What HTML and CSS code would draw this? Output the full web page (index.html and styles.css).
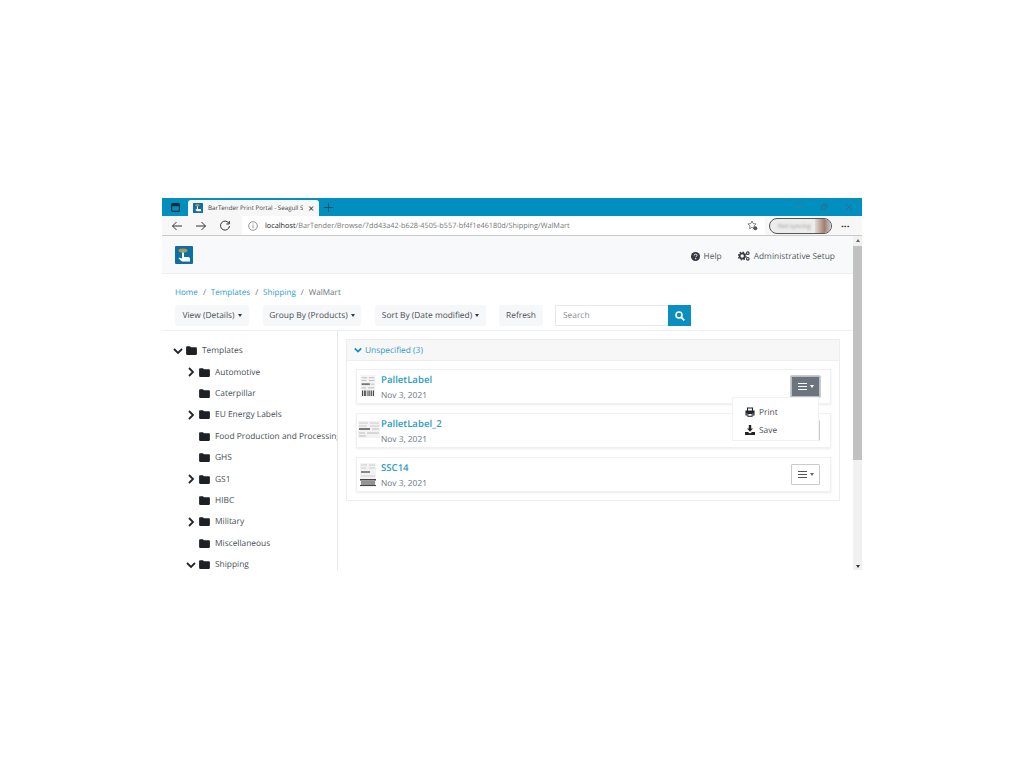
FILE: index.html
```html
<!DOCTYPE html>
<html lang="en">
<head>
    <meta charset="UTF-8">
    <meta name="viewport" content="width=device-width, initial-scale=1.0">
    <title>BarTender Print Portal</title>
    <link rel="stylesheet" href="styles.css">
</head>
<body>
    <div class="window">
        <!-- tab strip -->
        <div class="tabstrip">
            <div class="tab-menu">
                <svg width="9" height="9" viewBox="0 0 10 10"><rect x="0.7" y="0.7" width="8.6" height="8.6" rx="1.2" fill="none" stroke="#1d2b33" stroke-width="1.200"/><rect x="1" y="1" width="8" height="2.600" fill="#1d2b33"/></svg>
            </div>
            <div class="tab">
                <svg class="favicon" width="10" height="10" viewBox="0 0 18 18"><rect width="18" height="18" rx="1" fill="#0f6ea3"/><ellipse cx="8" cy="4" rx="4" ry="2" fill="#a89a55"/><path d="M7 6h2v5h5l1 4H7l-3-3 3-1z" fill="#fff"/></svg>
                <span class="tab-title">BarTender Print Portal - Seagull S</span>
                <span class="tab-close">×</span>
            </div>
            <svg class="tab-new" width="9" height="9" viewBox="0 0 10 10"><path d="M5 0v10M0 5h10" stroke="#1a4a5e" stroke-width="1"/></svg>
            <div class="win-controls">
                <svg width="8" height="8" viewBox="0 0 8 8"><path d="M0 4h8" stroke="#3f7f99" stroke-width="1"/></svg>
                <svg width="8" height="8" viewBox="0 0 8 8"><path d="M1.500 2.500h4v4h-4zM3 1h4v4" fill="none" stroke="#2f6f8a" stroke-width="1"/></svg>
                <svg width="8" height="8" viewBox="0 0 8 8"><path d="M1 1l6 6M7 1l-6 6" stroke="#2f6f8a" stroke-width="1"/></svg>
            </div>
        </div>

        <!-- address bar -->
        <div class="addressbar">
            <svg class="nav-icon" width="12" height="12" viewBox="0 0 12 12"><path d="M11 6H1.500M5.500 2L1.500 6l4 4" fill="none" stroke="#333" stroke-width="1"/></svg>
            <svg class="nav-icon" width="12" height="12" viewBox="0 0 12 12"><path d="M1 6h9.500M6.500 2l4 4-4 4" fill="none" stroke="#333" stroke-width="1"/></svg>
            <svg class="nav-icon" width="12" height="12" viewBox="0 0 12 12"><path d="M10 3.500A4.500 4.500 0 1 0 10.500 6M10.300 1v3h-3" fill="none" stroke="#333" stroke-width="1"/></svg>
            <div class="url-box">
                <svg width="10" height="10" viewBox="0 0 10 10"><circle cx="5" cy="5" r="4.300" fill="none" stroke="#777" stroke-width="0.800"/><path d="M5 4.300v3M5 2.500v1" stroke="#777" stroke-width="0.800"/></svg>
                <span class="url"><b>localhost</b>/BarTender/Browse/7dd43a42-b628-4505-b557-bf4f1e46180d/Shipping/WalMart</span>
                <svg class="fav-icon" width="11" height="11" viewBox="0 0 11 11"><path d="M5 1l1.200 2.600 2.800.3-2 2 .5 2.800L5 7.400 2.500 8.700 3 5.900l-2-2 2.800-.3z" fill="none" stroke="#555" stroke-width="0.700"/><circle cx="8.300" cy="8.300" r="2" fill="#555"/></svg>
            </div>
            <div class="profile"><span class="profile-name">Not syncing</span><span class="profile-pic"></span></div>
            <span class="more">···</span>
        </div>

        <!-- page -->
        <div class="viewport">
            <div class="page">
                <nav class="navbar">
                    <svg class="logo" width="18" height="18" viewBox="0 0 18 18"><rect width="18" height="18" rx="1" fill="#0f6ea3"/><ellipse cx="8" cy="4.500" rx="4.500" ry="2" fill="#a89a55"/><path d="M7 6.500h2v4.500h4.500l1.500 1v3.500H7l-3.500-3 1-1 2.500 1z" fill="#fff"/></svg>
                    <div class="navbar-links">
                        <a class="nav-link">
                            <svg width="9" height="9" viewBox="0 0 10 10"><circle cx="5" cy="5" r="5" fill="#343a40"/><path d="M3.400 3.900C3.500 2.900 4.200 2.400 5.100 2.400c1 0 1.600.6 1.600 1.300 0 1.200-1.400 1.100-1.400 2.200" fill="none" stroke="#fff" stroke-width="1"/><circle cx="5.200" cy="7.400" r=".7" fill="#fff"/></svg>
                            Help
                        </a>
                        <a class="nav-link">
                            <svg width="12" height="10" viewBox="0 0 12 10"><circle cx="4.200" cy="5" r="2.600" fill="none" stroke="#343a40" stroke-width="1.800"/><circle cx="4.200" cy="5" r="3.900" fill="none" stroke="#343a40" stroke-width="1.100" stroke-dasharray="1.500 1.560"/><circle cx="9.800" cy="2.200" r="1.300" fill="none" stroke="#343a40" stroke-width="1.100"/><circle cx="9.800" cy="7.800" r="1.300" fill="none" stroke="#343a40" stroke-width="1.100"/></svg>
                            Administrative Setup
                        </a>
                    </div>
                </nav>

                <ol class="breadcrumb">
                    <li><a>Home</a></li>
                    <li class="sep">/</li>
                    <li><a>Templates</a></li>
                    <li class="sep">/</li>
                    <li><a>Shipping</a></li>
                    <li class="sep">/</li>
                    <li class="current">WalMart</li>
                </ol>

                <div class="toolbar">
                    <button class="btn btn-view">View (Details)<span class="caret"></span></button>
                    <button class="btn btn-group">Group By (Products)<span class="caret"></span></button>
                    <button class="btn btn-sort">Sort By (Date modified)<span class="caret"></span></button>
                    <button class="btn btn-refresh">Refresh</button>
                    <div class="search">
                        <input type="text" placeholder="Search">
                        <button class="search-btn">
                            <svg width="10" height="10" viewBox="0 0 10 10"><circle cx="4" cy="4" r="3" fill="none" stroke="#fff" stroke-width="1.600"/><path d="M6.300 6.300L9.300 9.300" stroke="#fff" stroke-width="1.800"/></svg>
                        </button>
                    </div>
                </div>

                <div class="content">
                    <aside class="tree">
                        <div class="tree-row level-0"><svg class="chev" viewBox="0 0 10 10"><use href="#chev-down"/></svg><svg class="folder" viewBox="0 0 12 10"><use href="#folder"/></svg>Templates</div>
                        <div class="tree-row"><svg class="chev" viewBox="0 0 10 10"><use href="#chev-right"/></svg><svg class="folder" viewBox="0 0 12 10"><use href="#folder"/></svg>Automotive</div>
                        <div class="tree-row"><span class="chev"></span><svg class="folder" viewBox="0 0 12 10"><use href="#folder"/></svg>Caterpillar</div>
                        <div class="tree-row"><svg class="chev" viewBox="0 0 10 10"><use href="#chev-right"/></svg><svg class="folder" viewBox="0 0 12 10"><use href="#folder"/></svg>EU Energy Labels</div>
                        <div class="tree-row"><span class="chev"></span><svg class="folder" viewBox="0 0 12 10"><use href="#folder"/></svg>Food Production and Processing</div>
                        <div class="tree-row"><span class="chev"></span><svg class="folder" viewBox="0 0 12 10"><use href="#folder"/></svg>GHS</div>
                        <div class="tree-row"><svg class="chev" viewBox="0 0 10 10"><use href="#chev-right"/></svg><svg class="folder" viewBox="0 0 12 10"><use href="#folder"/></svg>GS1</div>
                        <div class="tree-row"><span class="chev"></span><svg class="folder" viewBox="0 0 12 10"><use href="#folder"/></svg>HIBC</div>
                        <div class="tree-row"><svg class="chev" viewBox="0 0 10 10"><use href="#chev-right"/></svg><svg class="folder" viewBox="0 0 12 10"><use href="#folder"/></svg>Military</div>
                        <div class="tree-row"><span class="chev"></span><svg class="folder" viewBox="0 0 12 10"><use href="#folder"/></svg>Miscellaneous</div>
                        <div class="tree-row"><svg class="chev" viewBox="0 0 10 10"><use href="#chev-down"/></svg><svg class="folder" viewBox="0 0 12 10"><use href="#folder"/></svg>Shipping</div>
                    </aside>

                    <main class="results">
                        <div class="group-card">
                            <div class="group-header">
                                <svg width="8" height="8" viewBox="0 0 10 10"><path d="M1 3l4 4 4-4" fill="none" stroke="#0a8fc0" stroke-width="2"/></svg>
                                Unspecified (3)
                            </div>
                            <div class="group-body">
                                <div class="item">
                                    <svg class="thumb" width="16" height="22" viewBox="0 0 16 24"><rect width="16" height="24" fill="#f3f3f3"/><path d="M1 3h6M9 3h6M1 6h5M9 6h6" stroke="#bbb"/><rect x="1" y="9" width="9" height="2" fill="#777"/><path d="M11 10h4M1 14h5M8 14h7" stroke="#bbb"/><path d="M2 17v6M4 17v6M5.500 17v6M8 17v6M10 17v6M12 17v6M14 17v6" stroke="#444" stroke-width="1.100"/></svg>
                                    <div class="item-text">
                                        <a class="item-name">PalletLabel</a>
                                        <span class="item-date">Nov 3, 2021</span>
                                    </div>
                                    <button class="menu-btn active"><span class="bars"></span><span class="caret"></span></button>
                                </div>
                                <div class="item">
                                    <svg class="thumb" width="22" height="17" viewBox="0 0 22 17"><rect width="22" height="17" fill="#f3f3f3"/><path d="M1 2h9M12 2h9M1 5h8M12 5h9" stroke="#ccc"/><rect x="1" y="7" width="11" height="2" fill="#777"/><path d="M14 8h7M1 12h6M9 12h12M1 15h7" stroke="#bbb"/></svg>
                                    <div class="item-text">
                                        <a class="item-name">PalletLabel_2</a>
                                        <span class="item-date">Nov 3, 2021</span>
                                    </div>
                                    <button class="menu-btn"><span class="bars"></span><span class="caret"></span></button>
                                </div>
                                <div class="item">
                                    <svg class="thumb" width="16" height="24" viewBox="0 0 16 24"><rect width="16" height="24" fill="#f3f3f3"/><path d="M1 2h6M9 2h6M1 5h5M9 5h6" stroke="#ccc"/><rect x="1" y="8" width="9" height="2" fill="#888"/><path d="M1 13h14" stroke="#ccc"/><rect x="0" y="16" width="16" height="1.500" fill="#444"/><path d="M2 18v4M4 18v4M6 18v4M8 18v4M10 18v4M12 18v4M14 18v4" stroke="#444" stroke-width="1.100"/><rect x="0" y="22" width="16" height="1" fill="#444"/></svg>
                                    <div class="item-text">
                                        <a class="item-name">SSC14</a>
                                        <span class="item-date">Nov 3, 2021</span>
                                    </div>
                                    <button class="menu-btn"><span class="bars"></span><span class="caret"></span></button>
                                </div>
                            </div>
                        </div>

                        <div class="dropdown">
                            <div class="dropdown-item">
                                <svg width="10" height="10" viewBox="0 0 10 10"><path d="M2.500 3.500V1h5v2.500M2.500 8H1V4h8v4H7.500" fill="none" stroke="#212529" stroke-width="1.100"/><rect x="1" y="4" width="8" height="2.500" fill="#212529"/><rect x="2.900" y="6.500" width="4.200" height="2.800" fill="none" stroke="#212529" stroke-width="1"/></svg>
                                Print
                            </div>
                            <div class="dropdown-item">
                                <svg width="10" height="10" viewBox="0 0 10 10"><path d="M3.800 0h2.400v3.500H8L5 6.800 2 3.500h1.800z" fill="#212529"/><path d="M0 7h3l2 1.500L7 7h3v3H0z" fill="#212529"/></svg>
                                Save
                            </div>
                        </div>
                    </main>
                </div>
            </div>

            <div class="scrollbar">
                <span class="arrow-up"></span>
                <div class="scroll-thumb"></div>
                <span class="arrow-down"></span>
            </div>
        </div>
    </div>

    <svg class="defs" width="0" height="0">
        <symbol id="chev-down" viewBox="0 0 10 10"><path d="M1 3l4 4 4-4" fill="none" stroke="#212529" stroke-width="1.800"/></symbol>
        <symbol id="chev-right" viewBox="0 0 10 10"><path d="M3 1l4 4-4 4" fill="none" stroke="#212529" stroke-width="1.800"/></symbol>
        <symbol id="folder" viewBox="0 0 12 10"><path d="M0 1.200C0 .6.400.2 1 .2h3.200l1.200 1.300H11c.6 0 1 .4 1 1V9c0 .5-.4.900-1 .9H1c-.6 0-1-.4-1-.9z" fill="#1d2126"/></symbol>
    </svg>
</body>
</html>
```

FILE: styles.css
```css
* {
    box-sizing: border-box;
}
body {
    margin: 0;
    background: #fff;
    font-family: "Open Sans", "Noto Sans", sans-serif;
    font-size: 8.400px;
    text-rendering: geometricPrecision;
    color: #495057;
}
.window {
    width: 700px;
    height: 372px;
    margin: 198px 0 0 162px;
    overflow: hidden;
    display: flex;
    flex-direction: column;
}
.defs {
    display: block;
}

/* browser chrome */
.tabstrip {
    height: 18px;
    background: #008fbe;
    display: flex;
    align-items: center;
    flex-shrink: 0;
}
.tab-menu {
    width: 26px;
    display: flex;
    justify-content: center;
}
.tab {
    width: 131px;
    height: 16px;
    margin-top: 2px;
    border-radius: 3px 3px 0 0;
    background: #f7f7f7;
    display: flex;
    align-items: center;
    padding: 0 0 1px 5px;
    font-size: 6.200px;
    color: #444;
}
.favicon {
    margin-right: 5px;
    flex-shrink: 0;
}
.tab-title {
    flex: 1;
    min-width: 0;
    white-space: nowrap;
    overflow: hidden;
}
.tab-close {
    width: 16px;
    font-size: 10px;
    color: #222;
    text-align: center;
}
.tab-new {
    margin-left: 5px;
}
.win-controls {
    margin-left: auto;
    display: flex;
    gap: 17px;
    padding-right: 9px;
}
.addressbar {
    height: 20px;
    background: #f7f7f7;
    display: flex;
    align-items: center;
    padding-left: 9px;
    flex-shrink: 0;
    border-bottom: 1px solid #c9c9c9;
}
.nav-icon {
    margin-right: 12px;
}
.url-box {
    width: 523px;
    height: 19px;
    margin-left: -1px;
    background: #fff;
    display: flex;
    align-items: center;
    padding: 0 7px 0 6px;
    font-size: 7.300px;
    color: #777;
}
.url {
    margin-left: 7px;
    flex: 1;
    white-space: nowrap;
    overflow: hidden;
}
.url b {
    font-weight: 400;
    color: #222;
}
.profile {
    width: 63px;
    height: 16px;
    margin-left: 4px;
    border: 1.500px solid #555;
    border-radius: 8px;
    display: flex;
    align-items: center;
    justify-content: space-between;
    overflow: hidden;
    background: #ececec;
    font-size: 6px;
    color: #999;
    padding-left: 8px;
}
.profile-name {
    filter: blur(1px);
}
.profile-pic {
    width: 16px;
    height: 100%;
    background: linear-gradient(90deg, #e2d8d2, #a07f70 60%, #ccc);
}
.more {
    margin-left: 9px;
    font-size: 10px;
    color: #333;
    font-weight: 700;
}

/* page */
.viewport {
    flex: 1;
    display: flex;
    min-height: 0;
}
.page {
    width: 691px;
    display: flex;
    flex-direction: column;
    overflow: hidden;
}
.navbar {
    height: 38px;
    background: #f8f9fa;
    border-bottom: 1px solid #eceeef;
    display: flex;
    align-items: center;
    justify-content: space-between;
    padding: 0 18px 0 13px;
    flex-shrink: 0;
}
.navbar-links {
    display: flex;
    gap: 16px;
    padding-top: 3px;
}
.nav-link {
    display: flex;
    align-items: center;
    gap: 4px;
    color: #555b61;
}
.breadcrumb {
    list-style: none;
    margin: 13px 0 0;
    padding: 0 0 0 13px;
    display: flex;
    gap: 5px;
    line-height: 12px;
    font-size: 8.100px;
    flex-shrink: 0;
}
.breadcrumb a {
    color: #2f9cc4;
}
.breadcrumb .current, .breadcrumb .sep {
    color: #6c757d;
}
.toolbar {
    display: flex;
    align-items: center;
    height: 21px;
    margin-top: 6px;
    padding-left: 13px;
    flex-shrink: 0;
}
.btn {
    height: 21px;
    border: none;
    border-radius: 2px;
    background: #f6f7f8;
    font: inherit;
    text-rendering: inherit;
    color: #495057;
    padding: 0;
}
.btn-view { width: 74px; }
.btn-group { width: 98px; margin-left: 14px; }
.btn-sort { width: 111px; margin-left: 14px; }
.btn-refresh { width: 44px; margin-left: 13px; }
.caret {
    display: inline-block;
    margin-left: 3px;
    vertical-align: 1px;
    border-top: 3px solid #343a40;
    border-left: 2.500px solid transparent;
    border-right: 2.500px solid transparent;
}
.search {
    display: flex;
    margin-left: 12px;
}
.search input {
    width: 113px;
    height: 21px;
    border: 1px solid #e6e8ea;
    border-right: none;
    padding: 0 7px;
    font: inherit;
    text-rendering: inherit;
    color: #495057;
}
.search input::placeholder {
    color: #8a9097;
}
.search-btn {
    width: 23px;
    height: 21px;
    border: none;
    padding: 0;
    background: #0a8fc0;
    display: flex;
    align-items: center;
    justify-content: center;
}
.content {
    flex: 1;
    display: flex;
    min-height: 0;
    margin-top: 4px;
    border-top: 1px solid #eef0f1;
}
.tree {
    width: 176px;
    flex-shrink: 0;
    border-right: 1px solid #e6e8ea;
    padding: 9px 0 0 11px;
    overflow: hidden;
}
.tree-row {
    height: 21.400px;
    display: flex;
    align-items: center;
    padding-left: 13px;
    white-space: nowrap;
    color: #495057;
}
.tree-row.level-0 {
    padding-left: 0;
}
.chev {
    width: 10px;
    height: 10px;
    margin-right: 3px;
    flex-shrink: 0;
}
.folder {
    width: 11px;
    height: 9px;
    margin-right: 5px;
    flex-shrink: 0;
}
.results {
    flex: 1;
    position: relative;
    padding: 8px 13px 0 8px;
}
.group-card {
    border: 1px solid #eceeef;
}
.group-header {
    height: 21px;
    background: #f7f7f7;
    border-bottom: 1px solid #eceeef;
    display: flex;
    align-items: center;
    gap: 3px;
    padding-left: 7px;
    color: #2f9cc4;
}
.group-body {
    padding: 8px 8px 8px 9px;
    display: flex;
    flex-direction: column;
    gap: 9px;
}
.item {
    height: 35px;
    border: 1px solid #eef0f1;
    box-shadow: 0 1px 2px rgba(0, 0, 0, 0.08);
    display: flex;
    align-items: center;
    position: relative;
    padding-left: 24px;
    padding-right: 10px;
}
.thumb {
    position: absolute;
    left: 3px;
    top: 5px;
}
.item:nth-child(2) .thumb {
    left: 1px;
    top: 7px;
}
.item-text {
    flex: 1;
    display: flex;
    flex-direction: column;
    gap: 3px;
    padding-top: 1px;
}
.item-name {
    font-size: 9.600px;
    font-weight: 600;
    line-height: 14px;
    color: #2f9cc4;
}
.item-date {
    color: #6c757d;
    line-height: 12px;
}
.menu-btn {
    width: 29px;
    height: 21px;
    border: 1px solid #c8ccd0;
    border-radius: 1px;
    background: #fff;
    padding: 0;
    display: flex;
    align-items: center;
    justify-content: center;
}
.menu-btn.active {
    background: #6c757d;
    border-color: #b8bfc4;
    box-shadow: 0 0 0 1px #c8cdd1;
}
.bars {
    width: 9px;
    height: 7px;
    border-top: 1px solid #555;
    border-bottom: 1px solid #555;
    position: relative;
}
.bars::after {
    content: "";
    position: absolute;
    left: 0;
    right: 0;
    top: 2px;
    height: 1px;
    background: #555;
}
.menu-btn .caret {
    border-top-color: #666;
}
.active .bars, .active .bars::after {
    border-color: #fff;
}
.active .bars::after {
    background: #fff;
}
.active .caret {
    border-top-color: #fff;
}
.dropdown {
    position: absolute;
    left: 394px;
    top: 66px;
    width: 87px;
    height: 44px;
    background: #fff;
    border: 1px solid #f0f1f2;
    padding-top: 5px;
}
.dropdown-item {
    height: 18px;
    display: flex;
    align-items: center;
    gap: 4px;
    padding-left: 12px;
    color: #495057;
}

/* scrollbar */
.scrollbar {
    width: 9px;
    background: #f1f1f1;
    display: flex;
    flex-direction: column;
    align-items: center;
}
.scroll-thumb {
    width: 9px;
    height: 214px;
    margin-top: 4px;
    background: #c1c1c1;
}
.arrow-up, .arrow-down {
    display: block;
    border-left: 2.500px solid transparent;
    border-right: 2.500px solid transparent;
}
.arrow-up {
    margin-top: 3px;
    border-bottom: 3px solid #666;
}
.arrow-down {
    margin-top: auto;
    margin-bottom: 2px;
    border-top: 3px solid #333;
}
```
